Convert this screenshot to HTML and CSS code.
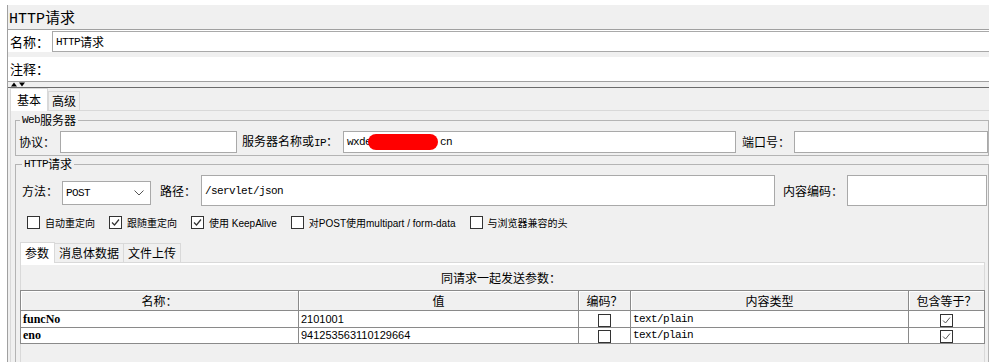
FILE: index.html
```html
<!DOCTYPE html>
<html lang="zh-CN">
<head>
  <meta charset="UTF-8">
  <title>HTTP请求</title>
  <link rel="stylesheet" href="styles.css">
</head>
<body>
<div class="window">
  <div class="title"><span class="sim">HTTP</span>请求</div>

  <div class="meta-row name-row">
    <span class="meta-label">名称：</span>
    <div class="text-field name-field"><span class="sim">HTTP</span>请求</div>
  </div>
  <div class="meta-row comment-row">
    <span class="meta-label">注释：</span>
  </div>

  <div class="divider">
    <svg class="arrows" width="14" height="5" viewBox="0 0 14 5">
      <polygon points="0,4.5 3,0.5 6,4.5" fill="#000"/>
      <polygon points="8,0.5 14,0.5 11,4.5" fill="#000"/>
    </svg>
  </div>

  <div class="tabbar">
    <div class="tab active">基本</div>
    <div class="tab">高级</div>
  </div>

  <div class="tab-body">
    <fieldset class="group web-group">
      <legend><span class="sim">Web</span>服务器</legend>
      <div class="form-row server-row">
        <span class="label l-protocol">协议：</span>
        <div class="text-field f-protocol"></div>
        <span class="label l-server">服务器名称或<span class="sim">IP</span>：</span>
        <div class="text-field f-server"><span class="sim">wxde</span><span class="redact"></span><span class="sim">cn</span></div>
        <span class="label l-port">端口号：</span>
        <div class="text-field f-port"></div>
      </div>
    </fieldset>

    <fieldset class="group http-group">
      <legend><span class="sim">HTTP</span>请求</legend>
      <div class="form-row request-row">
        <span class="label l-method">方法：</span>
        <div class="select">
          <span class="sim">POST</span>
          <svg width="10" height="6" viewBox="0 0 10 6"><polyline points="0.5,0.5 5,5 9.5,0.5" fill="none" stroke="#555" stroke-width="1"/></svg>
        </div>
        <span class="label l-path">路径：</span>
        <div class="text-field f-path"><span class="sim">/servlet/json</span></div>
        <span class="label l-encoding">内容编码：</span>
        <div class="text-field f-encoding"></div>
      </div>

      <div class="options">
        <label class="opt"><span class="cb"></span>自动重定向</label>
        <label class="opt"><span class="cb"><svg width="11" height="11" viewBox="0 0 11 11"><polyline points="2,5.5 4.5,8 9,2.5" fill="none" stroke="#333" stroke-width="1.2"/></svg></span>跟随重定向</label>
        <label class="opt"><span class="cb"><svg width="11" height="11" viewBox="0 0 11 11"><polyline points="2,5.5 4.5,8 9,2.5" fill="none" stroke="#333" stroke-width="1.2"/></svg></span>使用 KeepAlive</label>
        <label class="opt"><span class="cb"></span>对POST使用multipart / form-data</label>
        <label class="opt"><span class="cb"></span>与浏览器兼容的头</label>
      </div>

      <div class="tabbar inner-tabs">
        <div class="tab active">参数</div>
        <div class="tab">消息体数据</div>
        <div class="tab">文件上传</div>
      </div>
      <div class="params-panel">
        <div class="caption">同请求一起发送参数：</div>
        <table class="params">
          <colgroup>
            <col style="width: 278px">
            <col style="width: 280px">
            <col style="width: 52px">
            <col style="width: 278px">
            <col style="width: 76px">
          </colgroup>
          <thead>
            <tr>
              <th>名称：</th>
              <th>值</th>
              <th>编码？</th>
              <th>内容类型</th>
              <th>包含等于？</th>
            </tr>
          </thead>
          <tbody>
            <tr>
              <td class="serif">funcNo</td>
              <td class="num">2101001</td>
              <td class="center"><span class="cb"></span></td>
              <td class="sim">text/plain</td>
              <td class="center"><span class="cb"><svg width="11" height="11" viewBox="0 0 11 11"><polyline points="2,5.5 4.5,8 9,2.5" fill="none" stroke="#555" stroke-width="1"/></svg></span></td>
            </tr>
            <tr>
              <td class="serif">eno</td>
              <td class="num">941253563110129664</td>
              <td class="center"><span class="cb"></span></td>
              <td class="sim">text/plain</td>
              <td class="center"><span class="cb"><svg width="11" height="11" viewBox="0 0 11 11"><polyline points="2,5.5 4.5,8 9,2.5" fill="none" stroke="#555" stroke-width="1"/></svg></span></td>
            </tr>
          </tbody>
        </table>
      </div>
    </fieldset>
  </div>
</div>
</body>
</html>
```

FILE: styles.css
```css
:root {
  --panel-bg: #f0f0f0;
  --field-border: #a9a9a9;
  --tab-border: #d9d9d9;
  --grid: #8a8a8a;
}

* {
  box-sizing: border-box;
}

html,
body {
  margin: 0;
  overflow: hidden;
}

body {
  background: #fff;
  color: #000;
  font-family: "Noto Sans CJK SC", sans-serif;
  font-size: 12px;
}

.sim {
  font-family: "Liberation Mono", "Noto Sans CJK SC", monospace;
  font-size: 11px;
  letter-spacing: -0.6px;
}

.window {
  margin: 5px 0 0 7px;
  height: 357px;
  overflow: hidden;
  background: var(--panel-bg);
  border-left: 1px solid #a0a0a0;
}

.title {
  height: 24px;
  line-height: 24px;
  font-size: 15px;
  padding-left: 1px;
}

.title .sim {
  font-size: 15px;
  letter-spacing: 0;
}

/* name / comment */
.meta-row {
  display: flex;
  align-items: center;
  background: #fff;
}

.meta-label {
  width: 44px;
  padding-left: 2px;
  font-size: 13px;
  line-height: 16px;
}

.name-row {
  height: 23px;
  border-top: 1px solid #a0a0a0;
  padding-top: 1px;
  align-items: flex-start;
}

.name-row .meta-label {
  line-height: 21px;
}

.text-field {
  height: 100%;
  background: #fff;
  border: 1px solid var(--field-border);
  display: flex;
  align-items: center;
  padding-left: 3px;
  font-size: 12px;
  white-space: nowrap;
}

.name-field {
  height: 21px;
  flex: 1;
  border-right: none;
}

.comment-row {
  margin-top: 5px;
  height: 25px;
  border-bottom: 1px solid #a0a0a0;
}

.divider {
  height: 6px;
  border-bottom: 1px solid #6b6b6b;
  padding-left: 3px;
}

.arrows {
  display: block;
}

/* tabs */
.tabbar {
  display: flex;
  align-items: flex-end;
  height: 22px;
  padding-left: 2px;
}

.tab {
  height: 19px;
  line-height: 17px;
  padding: 0 3px;
  border: 1px solid var(--tab-border);
  border-bottom: none;
  background: var(--panel-bg);
  font-size: 12px;
  white-space: nowrap;
}

.tab.active {
  height: 23px;
  line-height: 22px;
  background: #fff;
  padding: 0 6px;
  position: relative;
  margin-bottom: -1px;
}

.tab-body {
  margin-left: 2px;
  border-top: 1px solid var(--tab-border);
  border-left: 1px solid var(--tab-border);
  height: 300px;
  padding: 1px 0 0 4px;
}

/* titled groups */
.group {
  margin: 0;
  border: 1px solid #b4b4b4;
  min-width: 0;
}

.group legend {
  height: 14px;
  font-size: 12px;
  line-height: 14px;
  padding: 0 2px;
  margin-left: 2px;
  white-space: nowrap;
}

.group legend .sim {
  vertical-align: top;
  line-height: 14px;
}

.web-group {
  margin-top: 1px;
  padding: 4px 0 2px 2px;
}

.http-group {
  margin-top: 1px;
  padding: 4px 0 0 4px;
  height: 220px;
}

.form-row {
  display: flex;
  align-items: center;
}

.label {
  white-space: nowrap;
  line-height: 16px;
}

.server-row {
  height: 22px;
}

.l-protocol { margin: 0 5px 0 1px; }
.l-server { margin: 0 5px 0 5px; }
.l-port { margin: 0 4px 0 6px; }

.f-protocol { width: 177px; }
.f-server { width: 393px; }
.f-port { flex: 1; }

.redact {
  display: inline-block;
  width: 70px;
  height: 16px;
  border-radius: 8px;
  background: #ff0000;
  margin: 0 2px 0 -3px;
}

.request-row {
  height: 31px;
}

.l-method { margin: 0 4px 0 2px; }
.l-path { margin: 0 5px 0 9px; }
.l-encoding { margin: 0 4px 0 8px; }

.select {
  width: 89px;
  height: 24px;
  align-self: flex-end;
  margin-bottom: 1px;
  background: #fff;
  border: 1px solid var(--field-border);
  display: flex;
  align-items: center;
  justify-content: space-between;
  padding: 0 6px 0 3px;
}

.f-path { flex: 1; }
.f-encoding { width: 140px; margin-right: 1px; }

/* options */
.options {
  display: flex;
  align-items: center;
  height: 16px;
  margin: 8px 0 0 7px;
  font-size: 10px;
}

.opt {
  display: flex;
  align-items: center;
  gap: 5px;
  margin-right: 14px;
  font-family: "Liberation Sans", "Noto Sans CJK SC", sans-serif;
  white-space: nowrap;
}

.cb {
  display: inline-flex;
  align-items: center;
  justify-content: center;
  width: 13px;
  height: 13px;
  border: 1px solid #333;
  background: #fff;
}

/* inner tabs */
.inner-tabs {
  margin-top: 12px;
  height: 20px;
  padding-left: 0;
}

.inner-tabs .tab {
  height: 19px;
  line-height: 17px;
  padding: 0 4px;
}

.inner-tabs .tab + .tab {
  margin-left: -1px;
}

.inner-tabs .tab.active {
  height: 21px;
  line-height: 20px;
  padding: 0 5px 0 4px;
}

.params-panel {
  margin-right: 3px;
  border: 1px solid var(--tab-border);
  box-shadow: inset 0 2px 0 #fff;
  height: 200px;
  padding-top: 5px;
}

.caption {
  text-align: center;
  font-size: 12px;
  line-height: 20px;
  padding-right: 3px;
}

.params {
  margin: 2px 0 0 -1px;
  border-collapse: collapse;
  table-layout: fixed;
  width: 964px;
  border: 1px solid var(--grid);
}

.params th {
  height: 20px;
  padding: 0;
  font-weight: normal;
  font-size: 12px;
  line-height: 18px;
  background: var(--panel-bg);
  border: 1px solid var(--grid);
  box-shadow: inset 1px 1px 0 #fff;
}

.params td {
  height: 16px;
  padding: 0 0 0 2px;
  line-height: 14px;
  background: #fff;
  border: 1px solid var(--grid);
  font-size: 11px;
  white-space: nowrap;
  overflow: hidden;
}

.params td.serif {
  font-family: "Liberation Serif", serif;
  font-size: 12px;
  font-weight: bold;
}

.params td.num {
  font-family: "Liberation Sans", sans-serif;
  font-size: 11px;
}

.params td.sim {
  font-size: 11px;
}

.params td.center {
  text-align: center;
  padding: 0;
}

.params td .cb {
  vertical-align: middle;
}
```
